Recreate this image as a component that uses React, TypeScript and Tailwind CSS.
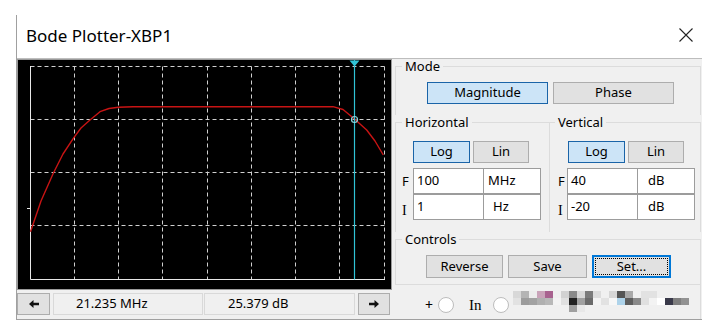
import React from "react";

const BG = "#f0f0f0";

const mosaic: string[][] = [
  ["#d8d8d8", "#b4b4b4", "#ececec", "#c9a3b9", "#a8628f", "#f0f0f0", "#d2d2d2", "#8a8a8a", "#d8d8d8", "#7a7a7a", "#dcdcdc", "#f0f0f0", "#d6d6d6", "#555555", "#a9a9a9", "#f0f0f0", "#e2e2e2", "#e2e2e2", "#f0f0f0", "#f0f0f0", "#f0f0f0", "#f0f0f0"],
  ["#e2e2e2", "#9c9c9c", "#a2a2a2", "#b0b0b0", "#b8b8b8", "#f3f3f3", "#e0e0e0", "#222222", "#a0a0a0", "#6a6a6a", "#f3f3f3", "#e2e2e2", "#f7f7f7", "#aed3ea", "#5e5e5e", "#8a8a8a", "#e0e0e0", "#f3f3f3", "#ffffff", "#3a3a4a", "#7e7e7e", "#929292"],
  ["#f0f0f0", "#f0f0f0", "#f0f0f0", "#f0f0f0", "#f0f0f0", "#f0f0f0", "#f0f0f0", "#a0a0a0", "#e8e8e8", "#f0f0f0", "#f0f0f0", "#f0f0f0", "#f0f0f0", "#f0f0f0", "#f0f0f0", "#f0f0f0", "#f0f0f0", "#f0f0f0", "#f0f0f0", "#f0f0f0", "#f0f0f0", "#f0f0f0"],
];

const curve = [
  [12.5, 171.7], [23, 141], [35.3, 113.3], [45, 94], [55.3, 78.3], [63, 68], [72, 60],
  [82, 51.7], [91, 48.5], [100.3, 47.3], [115, 46.7], [315, 46.7], [325, 49.5],
  [336.5, 59], [348.7, 70], [357, 81], [365.3, 95],
];

function Plot() {
  const vx = [56.5, 100.5, 144.5, 189.5, 233.5, 277.5, 321.5, 366.5];
  const hy = [6.5, 59.5, 112.5, 165.5];
  return (
    <div className="w-[375px] h-[231px] bg-black border border-[#9a9a9a]">
      <svg width="373" height="229" viewBox="0 0 373 229">
        <g stroke="#d0d0d0" strokeWidth="1" strokeDasharray="4 3" fill="none">
          {vx.map((x) => (
            <line key={x} x1={x} y1={6.5} x2={x} y2={219.5} />
          ))}
          {hy.map((y) => (
            <line key={y} x1={12.5} y1={y} x2={366.5} y2={y} />
          ))}
        </g>
        <path d="M12.5 6 V219.5 H367" stroke="#e8e8e8" fill="none" />
        <line x1="9" y1="148.5" x2="12.5" y2="148.5" stroke="#e8e8e8" />
        <polyline
          points={curve.map((p) => p.join(",")).join(" ")}
          fill="none"
          stroke="#c81414"
          strokeWidth="1.4"
          strokeLinejoin="round"
        />
        <line x1="336.5" y1="0" x2="336.5" y2="219.5" stroke="#30c3d6" strokeWidth="1.2" />
        <polygon points="331.5,0.5 341.5,0.5 336.5,6.5" fill="#30c3d6" />
        <circle cx="336.5" cy="59.5" r="3" fill="none" stroke="#8ad6de" strokeWidth="1.2" />
      </svg>
    </div>
  );
}

function Arrow({ dir }: { dir: "left" | "right" }) {
  return (
    <svg width="10" height="8" viewBox="0 0 10 8" className={dir === "right" ? "rotate-180" : ""}>
      <path d="M0 4 L4.5 0 V2.8 H10 V5.2 H4.5 V8 Z" fill="#111" />
    </svg>
  );
}

function Btn({
  children,
  active,
  className = "",
}: {
  children: React.ReactNode;
  active?: boolean;
  className?: string;
}) {
  return (
    <div
      className={
        "flex-none flex items-center justify-center border text-[13px] text-black " +
        (active ? "bg-[#cce4f7] border-[#1a64a8] " : "bg-[#e1e1e1] border-[#adadad] ") +
        className
      }
    >
      {children}
    </div>
  );
}

function Field({ value, unit, unitPad }: { value: string; unit: string; unitPad: string }) {
  return (
    <div className="flex">
      <div className="w-[71px] h-[26px] bg-white border border-[#9c9c9c] pl-[3px] flex items-center text-[13px]">
        {value}
      </div>
      <div className={"w-[57px] h-[26px] bg-white border border-l-0 border-[#9c9c9c] flex items-center text-[13px] " + unitPad}>
        {unit}
      </div>
    </div>
  );
}

function Legend({ children, ml }: { children: React.ReactNode; ml: string }) {
  return <legend className={"px-[3px] text-[13px] leading-[14px] text-black " + ml}>{children}</legend>;
}

export default function App() {
  return (
    <div className="w-[709px] h-[331px] bg-white pt-[15px] pl-[16px] font-['Noto_Sans','Liberation_Sans',sans-serif] text-black overflow-hidden">
      <div className="w-[686px] border-l border-b border-[#a0a0a0]">
        {/* title bar */}
        <div className="h-[44px] border-b border-[#bdbdbd] flex items-center justify-between pl-[9px] pr-[9px] pb-[3px] bg-white">
          <span className="text-[17px] leading-none">Bode Plotter-XBP1</span>
          <svg width="14" height="14" viewBox="0 0 14 14">
            <path d="M0.5 0.5 L13.5 13.5 M13.5 0.5 L0.5 13.5" stroke="#222" strokeWidth="1.1" />
          </svg>
        </div>

        {/* body */}
        <div className="h-[260px] flex" style={{ backgroundColor: BG }}>
          {/* left column */}
          <div className="w-[376px] flex-none flex flex-col">
            <Plot />
            <div className="mt-[3px] h-[22px] flex text-[13px]">
              <div className="w-[33px] flex-none bg-[#e1e1e1] border border-[#adadad] flex items-center justify-center">
                <Arrow dir="left" />
              </div>
              <div className="ml-[3px] w-[150px] flex-none border border-[#d9d9d9] pl-[22px] flex items-center">
                21.235 MHz
              </div>
              <div className="ml-[1px] w-[151px] flex-none border border-[#d9d9d9] pl-[23px] flex items-center">
                25.379 dB
              </div>
              <div className="ml-[3px] w-[32px] flex-none bg-[#e1e1e1] border border-[#adadad] flex items-center justify-center">
                <Arrow dir="right" />
              </div>
            </div>
          </div>

          {/* right column */}
          <div className="flex-1 pl-[2px] flex flex-col">
            <fieldset className="w-[306px] border-t border-l border-r border-[#dcdcdc] pb-[11px]">
              <Legend ml="ml-[6px]">Mode</Legend>
              <div className="mt-[9px] ml-[31px] flex gap-[5px]">
                <Btn active className="w-[121px] h-[22px]">Magnitude</Btn>
                <Btn className="w-[121px] h-[22px]">Phase</Btn>
              </div>
            </fieldset>

            <div className="flex">
              <fieldset className="w-[154px] border-t border-l border-[#dcdcdc] pb-[12px]">
                <Legend ml="ml-[6px]">Horizontal</Legend>
                <div className="mt-[12px] ml-[17px] flex gap-[3px]">
                  <Btn active className="w-[57px] h-[22px]">Log</Btn>
                  <Btn className="w-[56px] h-[22px]">Lin</Btn>
                </div>
                <div className="mt-[5px] h-[26px] flex pl-[6px]">
                  <span className="w-[11px] h-[26px] text-[13px] leading-[26px]">F</span>
                  <Field value="100" unit="MHz" unitPad="pl-[4px]" />
                </div>
                <div className="h-[26px] flex pl-[6px]">
                  <span className="w-[11px] h-[26px] text-[14px] leading-[34px] font-['Liberation_Serif',serif]">I</span>
                  <Field value="1" unit="Hz" unitPad="pl-[9px]" />
                </div>
              </fieldset>
              <fieldset className="w-[152px] border-t border-l border-r border-[#dcdcdc] pb-[12px]">
                <Legend ml="ml-[5px]">Vertical</Legend>
                <div className="mt-[12px] ml-[18px] flex gap-[3px]">
                  <Btn active className="w-[57px] h-[22px]">Log</Btn>
                  <Btn className="w-[56px] h-[22px]">Lin</Btn>
                </div>
                <div className="mt-[5px] h-[26px] flex pl-[8px]">
                  <span className="w-[9px] h-[26px] text-[13px] leading-[26px]">F</span>
                  <Field value="40" unit="dB" unitPad="pl-[10px]" />
                </div>
                <div className="h-[26px] flex pl-[8px]">
                  <span className="w-[9px] h-[26px] text-[14px] leading-[34px] font-['Liberation_Serif',serif]">I</span>
                  <Field value="-20" unit="dB" unitPad="pl-[10px]" />
                </div>
              </fieldset>
            </div>

            <fieldset className="w-[306px] border border-[#dcdcdc] pb-[6px]">
              <Legend ml="ml-[6px]">Controls</Legend>
              <div className="mt-[9px] ml-[30px] flex">
                <Btn className="w-[77px] h-[23px]">Reverse</Btn>
                <Btn className="ml-[5px] w-[79px] h-[23px]">Save</Btn>
                <div className="ml-[5px] w-[79px] h-[23px] flex-none border-2 border-[#0078d7] bg-[#e1e1e1] p-[1px]">
                  <div className="w-full h-full border border-dotted border-black flex items-center justify-center text-[13px]">
                    Set...
                  </div>
                </div>
              </div>
            </fieldset>

            <div className="flex-1 w-[306px] border-r border-[#dcdcdc] flex items-start pt-[6px] pl-[30px]">
              <span className="mt-[6px] text-[14px] leading-[16px]">+</span>
              <span className="mt-[6px] ml-[5px] w-[16px] h-[16px] rounded-full bg-white border border-[#bdbdbd]" />
              <span className="mt-[6px] ml-[15px] text-[15px] leading-[16px] font-['Liberation_Serif',serif]">In</span>
              <span className="mt-[6px] ml-[11px] w-[16px] h-[16px] rounded-full bg-white border border-[#bdbdbd]" />
              <div className="ml-[4px] flex flex-col">
                {mosaic.map((row, r) => (
                  <div key={r} className="flex">
                    {row.map((c, i) => (
                      <div key={i} className="w-[8px] h-[7px]" style={{ backgroundColor: c }} />
                    ))}
                  </div>
                ))}
              </div>
            </div>
          </div>
        </div>
      </div>
    </div>
  );
}
